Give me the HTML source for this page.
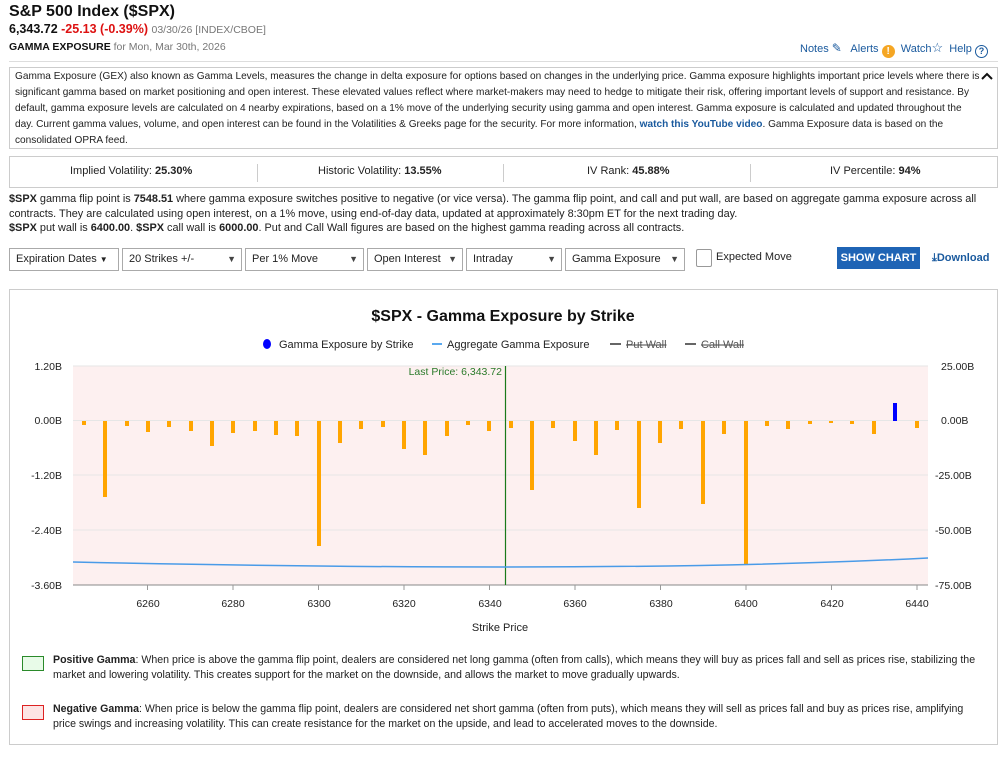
<!DOCTYPE html>
<html><head><meta charset="utf-8"><style>
*{box-sizing:border-box;margin:0;padding:0}
body{width:1007px;height:759px;background:#fff;font-family:"Liberation Sans",sans-serif;color:#222;position:relative;overflow:hidden}
.a{position:absolute;white-space:nowrap}
.blue{color:#1a5a9e}
.box{position:absolute;border:1px solid #ccc}
.ln{position:absolute;left:15px;font-size:10.1px;white-space:nowrap;color:#222}
.sel{position:absolute;top:248px;height:23px;border:1px solid #aaa;font-size:11px;line-height:21px;padding-left:6px;background:#fff}
.sel .ar{position:absolute;right:5px;top:0;font-size:9px;color:#444}
</style></head><body>
<div class="a" style="left:9px;top:3px;font-size:16px;font-weight:bold;color:#111">S&amp;P 500 Index ($SPX)</div>
<div class="a" style="left:9px;top:22px;font-size:12.5px;font-weight:bold;color:#111">6,343.72 <span style="color:#d11">-25.13 (-0.39%)</span> <span style="font-weight:normal;color:#777;font-size:10.5px">03/30/26 [INDEX/CBOE]</span></div>
<div class="a" style="left:9px;top:41px;font-size:10.5px;color:#777"><b style="color:#111">GAMMA EXPOSURE</b> for Mon, Mar 30th, 2026</div>
<div class="a blue" style="left:800px;top:40px;font-size:11px">Notes <span style="font-size:12px">&#9998;</span>&nbsp;&nbsp; Alerts <span style="display:inline-block;width:13px;height:13px;border-radius:50%;background:#f5a623;color:#fff;font-size:10px;text-align:center;line-height:13px;font-weight:bold;vertical-align:-2px">!</span>&nbsp; Watch<span style="font-size:13px">&#9734;</span>&nbsp; Help <span style="display:inline-block;width:13px;height:13px;border-radius:50%;border:1.5px solid #1a5a9e;font-size:9px;text-align:center;line-height:10px;font-weight:bold;vertical-align:-2px">?</span></div>
<div style="position:absolute;left:9px;right:9px;top:61px;border-top:1px solid #ddd"></div>

<div class="box" style="left:9px;top:67px;width:989px;height:82px"></div>
<div class="ln" style="top:71px">Gamma Exposure (GEX) also known as Gamma Levels, measures the change in delta exposure for options based on changes in the underlying price. Gamma exposure highlights important price levels where there is</div>
<div class="ln" style="top:87px">significant gamma based on market positioning and open interest. These elevated values reflect where market-makers may need to hedge to mitigate their risk, offering important levels of support and resistance. By</div>
<div class="ln" style="top:103px">default, gamma exposure levels are calculated on 4 nearby expirations, based on a 1% move of the underlying security using gamma and open interest. Gamma exposure is calculated and updated throughout the</div>
<div class="ln" style="top:119px">day. Current gamma values, volume, and open interest can be found in the Volatilities &amp; Greeks page for the security. For more information, <b class="blue">watch this YouTube video</b>. Gamma Exposure data is based on the</div>
<div class="ln" style="top:135px">consolidated OPRA feed.</div>
<svg style="position:absolute;left:981px;top:72px" width="12" height="9"><path d="M1 7 L6 2 L11 7" fill="none" stroke="#111" stroke-width="2"/></svg>

<div class="box" style="left:9px;top:156px;width:989px;height:32px"></div>
<div class="a" style="left:70px;top:165px;font-size:11px">Implied Volatility: <b>25.30%</b></div>
<div style="position:absolute;left:257px;top:164px;height:18px;border-left:1px solid #ccc"></div>
<div class="a" style="left:318px;top:165px;font-size:11px">Historic Volatility: <b>13.55%</b></div>
<div style="position:absolute;left:503px;top:164px;height:18px;border-left:1px solid #ccc"></div>
<div class="a" style="left:587px;top:165px;font-size:11px">IV Rank: <b>45.88%</b></div>
<div style="position:absolute;left:750px;top:164px;height:18px;border-left:1px solid #ccc"></div>
<div class="a" style="left:830px;top:165px;font-size:11px">IV Percentile: <b>94%</b></div>

<div class="ln" style="left:9px;top:193px;font-size:10.9px"><b>$SPX</b> gamma flip point is <b>7548.51</b> where gamma exposure switches positive to negative (or vice versa). The gamma flip point, and call and put wall, are based on aggregate gamma exposure across all</div>
<div class="ln" style="left:9px;top:208px;font-size:10.9px">contracts. They are calculated using open interest, on a 1% move, using end-of-day data, updated at approximately 8:30pm ET for the next trading day.</div>
<div class="ln" style="left:9px;top:222px;font-size:10.9px"><b>$SPX</b> put wall is <b>6400.00</b>. <b>$SPX</b> call wall is <b>6000.00</b>. Put and Call Wall figures are based on the highest gamma reading across all contracts.</div>

<div class="sel" style="left:9px;width:110px">Expiration Dates <span style="font-size:8px">&#9660;</span></div>
<div class="sel" style="left:122px;width:120px">20 Strikes +/-<span class="ar">&#9660;</span></div>
<div class="sel" style="left:245px;width:119px">Per 1% Move<span class="ar">&#9660;</span></div>
<div class="sel" style="left:367px;width:96px">Open Interest<span class="ar">&#9660;</span></div>
<div class="sel" style="left:466px;width:96px">Intraday<span class="ar">&#9660;</span></div>
<div class="sel" style="left:565px;width:120px">Gamma Exposure<span class="ar">&#9660;</span></div>
<div style="position:absolute;left:696px;top:249px;width:16px;height:18px;border:1px solid #999;border-radius:2px"></div>
<div class="a" style="left:716px;top:251px;font-size:11px">Expected Move</div>
<div class="a" style="left:837px;top:247px;width:83px;height:22px;background:#1f64b5;color:#fff;font-size:11px;font-weight:bold;text-align:center;line-height:22px">SHOW CHART</div>
<div class="a blue" style="left:932px;top:252px;font-size:11px;font-weight:bold">&#10515;Download</div>

<div class="box" style="left:9px;top:289px;width:989px;height:456px"></div>
<svg style="position:absolute;left:0;top:0" width="1007" height="759" font-family="Liberation Sans, sans-serif">
<text x="503" y="321" text-anchor="middle" font-size="16" font-weight="bold" fill="#111">$SPX - Gamma Exposure by Strike</text>
<ellipse cx="267" cy="344" rx="4" ry="5" fill="#00f"/>
<text x="279" y="348" font-size="11" fill="#222">Gamma Exposure by Strike</text>
<rect x="432" y="343" width="10" height="2" fill="#5aa9ef"/>
<text x="447" y="348" font-size="11" fill="#222">Aggregate Gamma Exposure</text>
<rect x="610" y="343" width="11" height="2" fill="#666"/>
<text x="626" y="348" font-size="11" fill="#555" text-decoration="line-through">Put Wall</text>
<rect x="685" y="343" width="11" height="2" fill="#666"/>
<text x="701" y="348" font-size="11" fill="#555" text-decoration="line-through">Call Wall</text>
<rect x="73" y="366" width="855" height="219" fill="#fdf0f0"/>
<g stroke="#e6e6e6" stroke-width="1"><line x1="73" x2="928" y1="366" y2="366"/><line x1="73" x2="928" y1="475" y2="475"/><line x1="73" x2="928" y1="530" y2="530"/><line x1="73" x2="928" y1="420.5" y2="420.5"/></g>
<line x1="73" x2="928" y1="585" y2="585" stroke="#888"/>
<g font-size="10.5" fill="#222" text-anchor="end">
<text x="62" y="370">1.20B</text><text x="62" y="424">0.00B</text><text x="62" y="479">-1.20B</text><text x="62" y="534">-2.40B</text><text x="62" y="589">-3.60B</text></g>
<g font-size="10.5" fill="#222" text-anchor="start">
<text x="941" y="370">25.00B</text><text x="941" y="424">0.00B</text><text x="935" y="479">-25.00B</text><text x="935" y="534">-50.00B</text><text x="935" y="589">-75.00B</text></g>
<g fill="#ffa500">
<rect x="82" y="421" width="4" height="4"/><rect x="103" y="421" width="4" height="76"/><rect x="125" y="421" width="4" height="5"/><rect x="146" y="421" width="4" height="11"/><rect x="167" y="421" width="4" height="6"/><rect x="189" y="421" width="4" height="10"/><rect x="210" y="421" width="4" height="25"/><rect x="231" y="421" width="4" height="12"/><rect x="253" y="421" width="4" height="10"/><rect x="274" y="421" width="4" height="14"/><rect x="295" y="421" width="4" height="15"/><rect x="317" y="421" width="4" height="125"/><rect x="338" y="421" width="4" height="22"/><rect x="359" y="421" width="4" height="8"/><rect x="381" y="421" width="4" height="6"/><rect x="402" y="421" width="4" height="28"/><rect x="423" y="421" width="4" height="34"/><rect x="445" y="421" width="4" height="15"/><rect x="466" y="421" width="4" height="4"/><rect x="487" y="421" width="4" height="10"/><rect x="509" y="421" width="4" height="7"/><rect x="530" y="421" width="4" height="69"/><rect x="551" y="421" width="4" height="7"/><rect x="573" y="421" width="4" height="20"/><rect x="594" y="421" width="4" height="34"/><rect x="615" y="421" width="4" height="9"/><rect x="637" y="421" width="4" height="87"/><rect x="658" y="421" width="4" height="22"/><rect x="679" y="421" width="4" height="8"/><rect x="701" y="421" width="4" height="83"/><rect x="722" y="421" width="4" height="13"/><rect x="744" y="421" width="4" height="143"/><rect x="765" y="421" width="4" height="5"/><rect x="786" y="421" width="4" height="8"/><rect x="808" y="421" width="4" height="3"/><rect x="829" y="421" width="4" height="2"/><rect x="850" y="421" width="4" height="3"/><rect x="872" y="421" width="4" height="13"/><rect x="915" y="421" width="4" height="7"/>
</g>
<rect x="893" y="403" width="4" height="18" fill="#00f"/>
<line x1="505.5" x2="505.5" y1="366" y2="585" stroke="#1a7a1a" stroke-width="1.2"/>
<text x="502" y="375" text-anchor="end" font-size="10.5" fill="#2a7a2a">Last Price: 6,343.72</text>
<path d="M73 562 Q300 567 505 567 Q750 567 928 558" fill="none" stroke="#4a9be8" stroke-width="1.5"/>
<g stroke="#999"><line x1="147.5" x2="147.5" y1="585" y2="590"/><line x1="233" x2="233" y1="585" y2="590"/><line x1="318.5" x2="318.5" y1="585" y2="590"/><line x1="404" x2="404" y1="585" y2="590"/><line x1="489.5" x2="489.5" y1="585" y2="590"/><line x1="575" x2="575" y1="585" y2="590"/><line x1="660.5" x2="660.5" y1="585" y2="590"/><line x1="746" x2="746" y1="585" y2="590"/><line x1="831.5" x2="831.5" y1="585" y2="590"/><line x1="917" x2="917" y1="585" y2="590"/></g>
<g font-size="10.5" fill="#222" text-anchor="middle">
<text x="148" y="607">6260</text><text x="233" y="607">6280</text><text x="319" y="607">6300</text><text x="404" y="607">6320</text><text x="490" y="607">6340</text><text x="575" y="607">6360</text><text x="661" y="607">6380</text><text x="746" y="607">6400</text><text x="832" y="607">6420</text><text x="917" y="607">6440</text>
<text x="500" y="631" font-size="11">Strike Price</text></g>
</svg>
<div style="position:absolute;left:22px;top:656px;width:22px;height:15px;background:#e8fbe8;border:1px solid #2a8a2a"></div>
<div class="ln" style="left:53px;top:654px;font-size:10.6px"><b>Positive Gamma</b>: When price is above the gamma flip point, dealers are considered net long gamma (often from calls), which means they will buy as prices fall and sell as prices rise, stabilizing the</div>
<div class="ln" style="left:53px;top:669px;font-size:10.6px">market and lowering volatility. This creates support for the market on the downside, and allows the market to move gradually upwards.</div>
<div style="position:absolute;left:22px;top:705px;width:22px;height:15px;background:#fde4e4;border:1px solid #d22"></div>
<div class="ln" style="left:53px;top:703px;font-size:10.6px"><b>Negative Gamma</b>: When price is below the gamma flip point, dealers are considered net short gamma (often from puts), which means they will sell as prices fall and buy as prices rise, amplifying</div>
<div class="ln" style="left:53px;top:718px;font-size:10.6px">price swings and increasing volatility. This can create resistance for the market on the upside, and lead to accelerated moves to the downside.</div>
</body></html>
